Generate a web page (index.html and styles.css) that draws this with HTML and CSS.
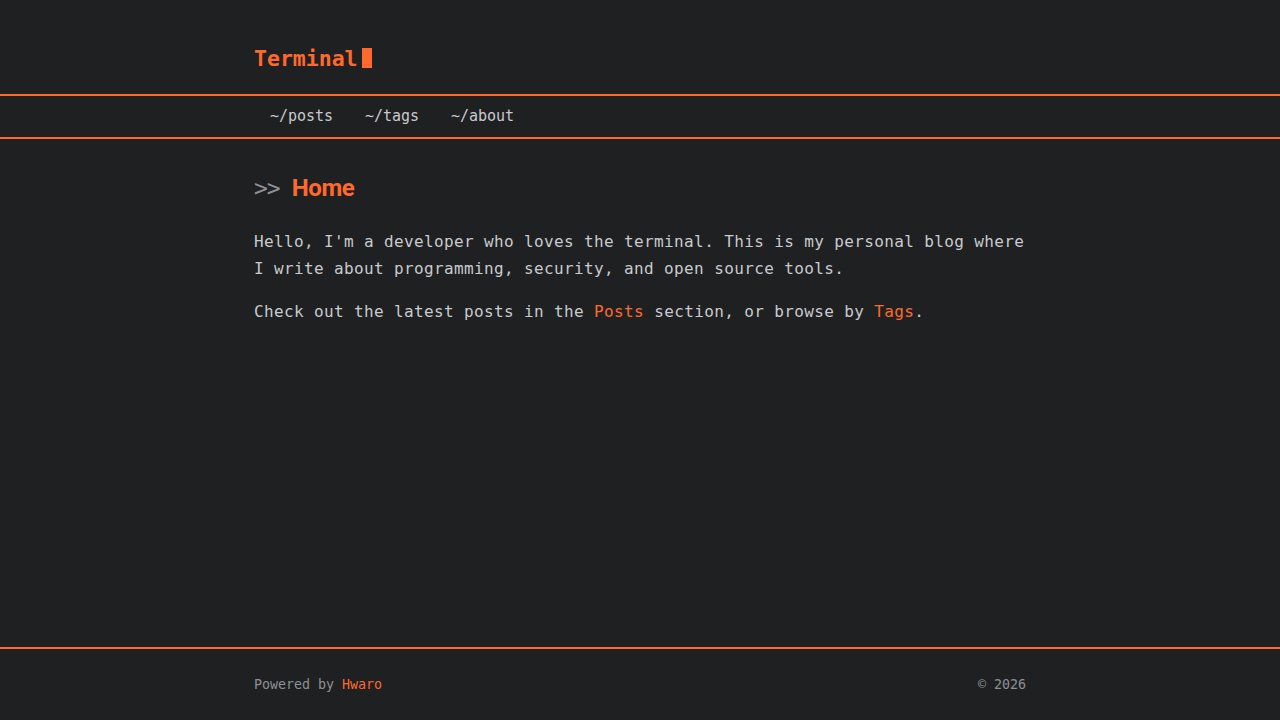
FILE: index.html
```html
<!DOCTYPE html>
<html lang="en">
<head>
<meta charset="utf-8">
<title>Terminal</title>
<link rel="stylesheet" href="styles.css">
</head>
<body>
<div class="page">
  <header class="site-header">
    <div class="container">
      <a class="logo" href="#">Terminal<span class="cursor"></span></a>
    </div>
  </header>
  <nav class="site-nav">
    <div class="container nav-inner">
      <a class="nav-link" href="#">~/posts</a>
      <a class="nav-link" href="#">~/tags</a>
      <a class="nav-link" href="#">~/about</a>
    </div>
  </nav>
  <main class="content">
    <div class="container">
      <h1 class="page-title"><span class="prompt">&gt;&gt;</span><span class="title-text">Home</span></h1>
      <p class="para">Hello, I'm a developer who loves the terminal. This is my personal blog where I write about programming, security, and open source tools.</p>
      <p class="para">Check out the latest posts in the <a class="accent-link" href="#">Posts</a> section, or browse by <a class="accent-link" href="#">Tags</a>.</p>
    </div>
  </main>
  <footer class="site-footer">
    <div class="container footer-inner">
      <span>Powered by <a class="accent-link" href="#">Hwaro</a></span>
      <span>© 2026</span>
    </div>
  </footer>
</div>
</body>
</html>
```

FILE: styles.css
```css
html, body {
  margin: 0;
  padding: 0;
  background: #1f2022;
}
body {
  font-family: "DejaVu Sans Mono", "Liberation Mono", monospace;
  color: #c8cacd;
  font-size: 16px;
  letter-spacing: 0.37px;
}
a { text-decoration: none; }
.page {
  min-height: 100vh;
  display: flex;
  flex-direction: column;
}
.container {
  width: 772px;
  margin: 0 auto;
}
.site-header {
  padding: 43px 0 21px;
  border-bottom: 2px solid #ff6a2c;
}
.logo {
  display: flex;
  align-items: center;
  height: 30px;
  color: #ff6a2c;
  font-weight: bold;
  font-size: 21.5px;
  letter-spacing: 0;
}
.cursor {
  display: inline-block;
  width: 10px;
  height: 20px;
  margin-left: 4px;
  background: #ff6a2c;
}
.site-nav {
  border-bottom: 2px solid #ff6a2c;
  padding: 9px 0 10px;
}
.nav-inner {
  display: flex;
}
.nav-link {
  color: #c8cacd;
  font-size: 15px;
  letter-spacing: -0.03px;
  line-height: 22px;
  padding: 0 16px;
}
.content {
  flex: 1;
}
.page-title {
  margin: 35px 0 25px;
  font-size: 24px;
  line-height: 29px;
  display: flex;
  align-items: baseline;
  letter-spacing: 0;
}
.prompt {
  color: #8d9094;
  font-weight: normal;
  font-size: 23px;
  letter-spacing: -1px;
}
.title-text {
  margin-left: 12px;
  color: #ff6a2c;
  font-family: "Roboto", "Open Sans", sans-serif;
  font-weight: 700;
  font-size: 24px;
  letter-spacing: -0.4px;
}
.para {
  margin: 0 0 16px;
  line-height: 27px;
}
.accent-link {
  color: #ff6a2c;
}
.site-footer {
  border-top: 2px solid #ff6a2c;
  padding: 26px 0 25px;
  color: #8d9094;
  font-size: 13.3px;
  letter-spacing: 0;
  line-height: 20px;
}
.footer-inner {
  display: flex;
  justify-content: space-between;
}
```
